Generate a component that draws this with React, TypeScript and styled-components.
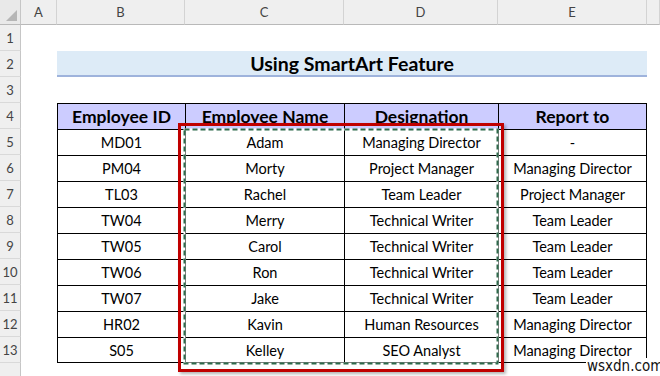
import React from 'react';
import styled, { createGlobalStyle } from 'styled-components';

const GlobalStyle = createGlobalStyle`
  html, body {
    margin: 0;
    padding: 0;
    background: #ffffff;
  }
`;

const COLS = '21px 36px 128px 159px 154px 149px 1fr';

const Sheet = styled.div`
  position: relative;
  width: 660px;
  height: 376px;
  overflow: hidden;
  background: #ffffff;
  font-family: Lato, 'Open Sans', sans-serif;
  color: #000;
`;

const Row = styled.div<{ $h?: number }>`
  display: grid;
  grid-template-columns: ${COLS};
  height: ${(p) => p.$h ?? 26}px;
`;

const Corner = styled.div`
  position: relative;
  background: #e9e9e9;
  border-right: 1px solid #c6c6c6;
  border-bottom: 1px solid #b9b9b9;
  box-sizing: border-box;

  &::after {
    content: '';
    position: absolute;
    right: 3px;
    bottom: 3px;
    width: 0;
    height: 0;
    border-left: 11px solid transparent;
    border-bottom: 11px solid #b6b6b6;
  }
`;

const ColHead = styled.div`
  display: flex;
  align-items: center;
  justify-content: center;
  background: #efefef;
  border-right: 1px solid #d3d3d3;
  border-bottom: 1px solid #b9b9b9;
  box-sizing: border-box;
  font-size: 13px;
  color: #444;
`;

const RowHead = styled.div`
  display: flex;
  align-items: center;
  justify-content: center;
  background: #efefef;
  border-right: 1px solid #c6c6c6;
  border-bottom: 1px solid #d9d9d9;
  box-sizing: border-box;
  font-size: 13px;
  color: #444;
`;

const Blank = styled.div``;

const Title = styled.div`
  grid-column: 3 / 7;
  display: flex;
  align-items: center;
  justify-content: center;
  background: #ddebf7;
  border-bottom: 2px solid #9eb3dc;
  box-sizing: border-box;
  font-size: 19.5px;
  font-weight: 700;
  color: #000;
`;

const Cell = styled.div<{ $head?: boolean; $last?: boolean; $bottom?: boolean }>`
  display: flex;
  align-items: center;
  justify-content: center;
  box-sizing: border-box;
  border-left: 1px solid #000;
  border-top: 1px solid #000;
  border-right: ${(p) => (p.$last ? '1px solid #000' : 'none')};
  border-bottom: ${(p) => (p.$bottom ? '1px solid #000' : 'none')};
  background: ${(p) => (p.$head ? '#ccccff' : '#ffffff')};
  font-size: ${(p) => (p.$head ? '17.5px' : '14.5px')};
  font-weight: ${(p) => (p.$head ? 700 : 400)};
  color: #000;
  white-space: nowrap;
`;

const Highlight = styled.div`
  position: absolute;
  left: 178px;
  top: 123px;
  width: 326px;
  height: 249px;
  box-sizing: border-box;
  border: 3px solid #c00000;
  box-shadow: 2px 2px 3px rgba(0, 0, 0, 0.3);
  pointer-events: none;
`;

const Marquee = styled.svg`
  position: absolute;
  left: 183px;
  top: 128px;
  pointer-events: none;
`;

const Watermark = styled.div`
  position: absolute;
  left: 586px;
  top: 358px;
  padding: 0 1px;
  background: #ffffff;
  font-family: 'Liberation Sans Narrow', 'DejaVu Sans Condensed', 'Liberation Sans', sans-serif;
  font-stretch: condensed;
  font-size: 15px;
  line-height: 16px;
  color: #111;
`;

const letters = ['A', 'B', 'C', 'D', 'E', ''];

const data = [
  ['MD01', 'Adam', 'Managing Director', '-'],
  ['PM04', 'Morty', 'Project Manager', 'Managing Director'],
  ['TL03', 'Rachel', 'Team Leader', 'Project Manager'],
  ['TW04', 'Merry', 'Technical Writer', 'Team Leader'],
  ['TW05', 'Carol', 'Technical Writer', 'Team Leader'],
  ['TW06', 'Ron', 'Technical Writer', 'Team Leader'],
  ['TW07', 'Jake', 'Technical Writer', 'Team Leader'],
  ['HR02', 'Kavin', 'Human Resources', 'Managing Director'],
  ['S05', 'Kelley', 'SEO Analyst', 'Managing Director'],
];

const headers = ['Employee ID', 'Employee Name', 'Designation', 'Report to'];

const App = () => {
  const mw = 316;
  const mh = 237;

  return (
    <>
      <GlobalStyle />
      <Sheet>
        <Row $h={25}>
          <Corner />
          {letters.map((l, i) => (
            <ColHead key={i}>{l}</ColHead>
          ))}
        </Row>
        <Row>
          <RowHead>1</RowHead>
        </Row>
        <Row>
          <RowHead>2</RowHead>
          <Blank />
          <Title>Using SmartArt Feature</Title>
        </Row>
        <Row>
          <RowHead>3</RowHead>
        </Row>
        <Row>
          <RowHead>4</RowHead>
          <Blank />
          {headers.map((h, i) => (
            <Cell key={h} $head $last={i === 3}>
              {h}
            </Cell>
          ))}
        </Row>
        {data.map((r, ri) => (
          <Row key={r[0]}>
            <RowHead>{ri + 5}</RowHead>
            <Blank />
            {r.map((v, i) => (
              <Cell key={i} $last={i === 3} $bottom={ri === data.length - 1}>
                {v}
              </Cell>
            ))}
          </Row>
        ))}
        <Row>
          <RowHead />
        </Row>

        <Highlight />
        <Marquee width={mw} height={mh} viewBox={`0 0 ${mw} ${mh}`}>
          <rect x={1.5} y={1.5} width={mw - 3} height={mh - 3} fill="none" stroke="#ffffff" strokeWidth={2} />
          <rect
            x={1.5}
            y={1.5}
            width={mw - 3}
            height={mh - 3}
            fill="none"
            stroke="#2f6b4c"
            strokeWidth={2}
            strokeDasharray="5 3"
          />
        </Marquee>
        <Watermark>wsxdn.com</Watermark>
      </Sheet>
    </>
  );
};

export default App;
